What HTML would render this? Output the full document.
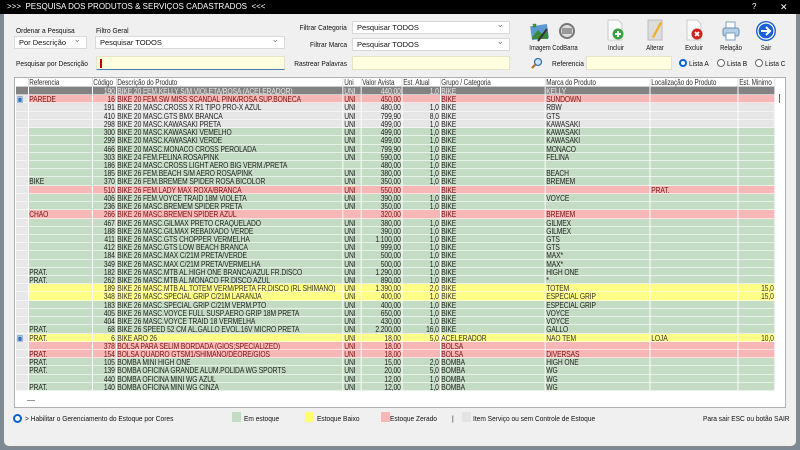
<!DOCTYPE html>
<html><head><meta charset="utf-8"><style>
*{margin:0;padding:0;box-sizing:border-box}
body{width:800px;height:450px;background:#7d8a96;font-family:"Liberation Sans",sans-serif;position:relative;overflow:hidden}
.win{position:absolute;left:3px;top:0;width:794px;height:447px;background:#f0f0f0;border:1px solid #888;border-top:none;border-radius:0 0 6px 6px}
.tb{position:absolute;left:0;top:0;width:800px;height:14px;background:#000;color:#fff;font-size:8px;line-height:14px}
.a{position:absolute;font-size:7.5px;color:#111;white-space:nowrap;transform:scaleX(.88);transform-origin:0 0}
.ar{position:absolute;font-size:7.5px;color:#111;white-space:nowrap;transform:scaleX(.88);transform-origin:100% 0;text-align:right}
.sel{position:absolute;height:13px;background:#fff;border:1px solid #d9d9d9;font-size:7.5px;line-height:11px;padding-left:4px;color:#111}
.sel:after{content:"⌄";position:absolute;right:5px;top:-3px;color:#777;font-size:9px}
.inp{position:absolute;height:14px;background:#ffffe0;border:1px solid #e4e4c8}
.ic{position:absolute;width:22px;height:22px}
.lb{position:absolute;font-size:7px;color:#111;transform:translateX(-50%) scaleX(.85);white-space:nowrap}
.rad{position:absolute;width:8px;height:8px;border-radius:50%;border:1px solid #666;background:#fff}
.rad.on{border:2.5px solid #0a5fd0}
.grid{position:absolute;left:14px;top:77px;width:772px;height:331px;background:#fff;border:1px solid #b0b0b0}
table{position:absolute;left:16px;top:78px;border-collapse:collapse;table-layout:fixed;width:948.75px;transform:scaleX(.8);transform-origin:0 0;font-size:8.4px;letter-spacing:-.1px}
td{height:8.22px;line-height:8.22px;padding:0 1px;border-right:1px solid #fff;box-shadow:inset 0 -1px 0 rgba(255,255,255,.6);white-space:nowrap;overflow:hidden;color:#222}
tr.h td{height:9px;line-height:9px;background:#fff;border-right:1px solid #ddd;color:#333;font-size:8px;box-shadow:inset 0 -1px 0 #ccc}
td.r{text-align:right}
tr.g td{background:#c4dcc4}
tr.p td{background:#f7b7b7;color:#7a1010}
tr.y td{background:#ffff88;color:#333}
tr.w td{background:#e6e6e6}
tr.s td{background:#838383;color:#e8e8e8}
td.i{background:#e8e8e8!important}
.sq{position:absolute;width:9px;height:10px;top:412px}
</style></head><body>
<div class="win"></div>
<div class="tb"><span style="margin-left:7px">&gt;&gt;&gt;&nbsp; PESQUISA DOS PRODUTOS &amp; SERVIÇOS CADASTRADOS &nbsp;&lt;&lt;&lt;</span><span style="position:absolute;left:752px">?</span><span style="position:absolute;left:780px;font-size:9px">✕</span></div>

<div class="a" style="left:16px;top:26px">Ordenar a Pesquisa</div>
<div class="sel" style="left:14px;top:36px;width:73px">Por Descrição</div>
<div class="a" style="left:96px;top:26px">Filtro Geral</div>
<div class="sel" style="left:95px;top:36px;width:190px">Pesquisar TODOS</div>
<div class="a" style="left:16px;top:59px">Pesquisar por Descrição</div>
<div class="inp" style="left:96px;top:56px;width:189px;border-bottom:1px solid #4a7fb0"><div style="position:absolute;left:3px;top:2px;width:2px;height:9px;background:#c00"></div></div>
<div class="ar" style="right:453px;top:23px">Filtrar Categoria</div>
<div class="sel" style="left:352px;top:21px;width:158px">Pesquisar TODOS</div>
<div class="ar" style="right:453px;top:40px">Filtrar Marca</div>
<div class="sel" style="left:352px;top:38px;width:158px">Pesquisar TODOS</div>
<div class="ar" style="right:453px;top:59px">Rastrear Palavras</div>
<div class="inp" style="left:352px;top:56px;width:158px"></div>

<svg class="ic" style="left:529px;top:21px" viewBox="0 0 22 22"><rect x="2" y="4" width="17" height="14" fill="#5a9ad0" transform="rotate(-8 11 11)"/><path d="M3 16 L9 9 L14 14 L19 10 L19 18 L3 18Z" fill="#3a8a3a"/><path d="M9 20 L18 8" stroke="#333" stroke-width="2"/><path d="M4 3 l3 3 M7 3 l-3 3" stroke="#2a8a2a" stroke-width="1.5"/></svg>
<svg class="ic" style="left:556px;top:21px" viewBox="0 0 22 22"><circle cx="11" cy="10" r="8" fill="#777"/><circle cx="11" cy="10" r="6" fill="#ddd"/><path d="M7 7v6M9 7v6M11 7v6M13 7v6M15 7v6" stroke="#555" stroke-width="1"/></svg>
<svg class="ic" style="left:604px;top:19px" viewBox="0 0 22 22"><path d="M4 1h10l4 4v16H4z" fill="#fafafa" stroke="#ccc"/><circle cx="14" cy="15" r="5.5" fill="#3aa040"/><path d="M14 12v6M11 15h6" stroke="#fff" stroke-width="2"/></svg>
<svg class="ic" style="left:644px;top:19px" viewBox="0 0 22 22"><path d="M4 1h14v20H4z" fill="#ddd" stroke="#bbb"/><path d="M8 18 L16 3 L18 4 L10 19z" fill="#f0b020"/></svg>
<svg class="ic" style="left:683px;top:19px" viewBox="0 0 22 22"><path d="M4 1h10l4 4v16H4z" fill="#fafafa" stroke="#ccc"/><circle cx="14" cy="15" r="5.5" fill="#d02020"/><path d="M12 13l4 4M16 13l-4 4" stroke="#fff" stroke-width="1.8"/></svg>
<svg class="ic" style="left:720px;top:20px" viewBox="0 0 22 22"><path d="M6 2h9v6H6z" fill="#fff" stroke="#7aa0c8"/><rect x="3" y="8" width="16" height="8" rx="2" fill="#b8cfe8" stroke="#6a90b8"/><path d="M6 13h9v7H6z" fill="#fff" stroke="#7aa0c8"/></svg>
<svg class="ic" style="left:755px;top:20px" viewBox="0 0 22 22"><circle cx="11" cy="11" r="10" fill="#1a5fd8"/><circle cx="11" cy="11" r="8" fill="none" stroke="#fff" stroke-width="1.2"/><path d="M6 11h8M11 7l4 4-4 4" stroke="#fff" stroke-width="2" fill="none"/></svg>
<div class="lb" style="left:540px;top:45px">Imagem</div>
<div class="lb" style="left:565px;top:45px">CodBarra</div>
<div class="lb" style="left:616px;top:45px">Incluir</div>
<div class="lb" style="left:655px;top:45px">Alterar</div>
<div class="lb" style="left:694px;top:45px">Excluir</div>
<div class="lb" style="left:731px;top:45px">Relação</div>
<div class="lb" style="left:766px;top:45px">Sair</div>
<svg style="position:absolute;left:531px;top:57px" width="12" height="12" viewBox="0 0 12 12"><circle cx="7" cy="5" r="3.5" fill="#cfe4f8" stroke="#3a70b0" stroke-width="1.3"/><path d="M4.5 7.5L1 11" stroke="#b07020" stroke-width="2"/></svg>
<div class="a" style="left:552px;top:59px">Referencia</div>
<div class="inp" style="left:586px;top:56px;width:86px"></div>
<div class="rad on" style="left:679px;top:59px"></div><div class="a" style="left:689px;top:59px">Lista A</div>
<div class="rad" style="left:717px;top:59px"></div><div class="a" style="left:727px;top:59px">Lista B</div>
<div class="rad" style="left:755px;top:59px"></div><div class="a" style="left:765px;top:59px">Lista C</div>

<div class="grid"></div>
<div style="position:absolute;left:779px;top:94px;width:1px;height:9px;background:#666"></div>
<div style="position:absolute;left:27px;top:400px;width:8px;height:1px;background:#999"></div>
<table>
<colgroup><col style="width:15px"><col style="width:80px"><col style="width:30px"><col style="width:283.75px"><col style="width:22.5px"><col style="width:51.25px"><col style="width:47.5px"><col style="width:131.25px"><col style="width:131.25px"><col style="width:110px"><col style="width:46.25px"></colgroup>
<tr class="h"><td></td><td>Referencia</td><td>Código</td><td>Descrição do Produto</td><td>Uni</td><td>Valor Avista</td><td>Est. Atual</td><td>Grupo / Categoria</td><td>Marca do Produto</td><td>Localização do Produto</td><td>Est. Minimo</td></tr>
<tr class="s"><td></td><td></td><td class="r">190</td><td>BIKE 20 FEM.KELLY S/M VIOLETA/ROSA (ACELERADOR)</td><td>UNI</td><td class="r">440,00</td><td class="r">1,0</td><td>BIKE</td><td>KELLY</td><td></td><td></td></tr>
<tr class="p"><td class="i" style="color:#3070c0">▣</td><td>PAREDE</td><td class="r">16</td><td>BIKE 20 FEM.SW MISS SCANDAL PINK/ROSA SUP.BONECA</td><td>UNI</td><td class="r">450,00</td><td class="r"></td><td>BIKE</td><td>SUNDOWN</td><td></td><td></td></tr>
<tr class="w"><td></td><td></td><td class="r">191</td><td>BIKE 20 MASC.CROSS X R1 TIPO PRO-X AZUL</td><td>UNI</td><td class="r">480,00</td><td class="r">1,0</td><td>BIKE</td><td>RBW</td><td></td><td></td></tr>
<tr class="w"><td></td><td></td><td class="r">410</td><td>BIKE 20 MASC.GTS BMX BRANCA</td><td>UNI</td><td class="r">799,90</td><td class="r">8,0</td><td>BIKE</td><td>GTS</td><td></td><td></td></tr>
<tr class="w"><td></td><td></td><td class="r">298</td><td>BIKE 20 MASC.KAWASAKI PRETA</td><td>UNI</td><td class="r">499,00</td><td class="r">1,0</td><td>BIKE</td><td>KAWASAKI</td><td></td><td></td></tr>
<tr class="g"><td class="i"></td><td></td><td class="r">300</td><td>BIKE 20 MASC.KAWASAKI VEMELHO</td><td>UNI</td><td class="r">499,00</td><td class="r">1,0</td><td>BIKE</td><td>KAWASAKI</td><td></td><td></td></tr>
<tr class="g"><td class="i"></td><td></td><td class="r">299</td><td>BIKE 20 MASC.KAWASAKI VERDE</td><td>UNI</td><td class="r">499,00</td><td class="r">1,0</td><td>BIKE</td><td>KAWASAKI</td><td></td><td></td></tr>
<tr class="g"><td class="i"></td><td></td><td class="r">466</td><td>BIKE 20 MASC.MONACO CROSS PEROLADA</td><td>UNI</td><td class="r">799,90</td><td class="r">1,0</td><td>BIKE</td><td>MONACO</td><td></td><td></td></tr>
<tr class="g"><td class="i"></td><td></td><td class="r">303</td><td>BIKE 24 FEM.FELINA ROSA/PINK</td><td>UNI</td><td class="r">590,00</td><td class="r">1,0</td><td>BIKE</td><td>FELINA</td><td></td><td></td></tr>
<tr class="g"><td class="i"></td><td></td><td class="r">186</td><td>BIKE 24 MASC.CROSS LIGHT AERO BIG VERM./PRETA</td><td></td><td class="r">480,00</td><td class="r">1,0</td><td>BIKE</td><td></td><td></td><td></td></tr>
<tr class="g"><td class="i"></td><td></td><td class="r">185</td><td>BIKE 26 FEM.BEACH S/M AERO ROSA/PINK</td><td>UNI</td><td class="r">380,00</td><td class="r">1,0</td><td>BIKE</td><td>BEACH</td><td></td><td></td></tr>
<tr class="g"><td class="i"></td><td>BIKE</td><td class="r">370</td><td>BIKE 26 FEM.BREMEM SPIDER ROSA BICOLOR</td><td>UNI</td><td class="r">350,00</td><td class="r">1,0</td><td>BIKE</td><td>BREMEM</td><td></td><td></td></tr>
<tr class="p"><td class="i"></td><td></td><td class="r">510</td><td>BIKE 26 FEM.LADY MAX ROXA/BRANCA</td><td>UNI</td><td class="r">550,00</td><td class="r"></td><td>BIKE</td><td></td><td>PRAT.</td><td></td></tr>
<tr class="g"><td class="i"></td><td></td><td class="r">406</td><td>BIKE 26 FEM.VOYCE TRAID 18M VIOLETA</td><td>UNI</td><td class="r">390,00</td><td class="r">1,0</td><td>BIKE</td><td>VOYCE</td><td></td><td></td></tr>
<tr class="g"><td class="i"></td><td></td><td class="r">236</td><td>BIKE 26 MASC.BREMEM SPIDER PRETA</td><td>UNI</td><td class="r">350,00</td><td class="r">1,0</td><td>BIKE</td><td></td><td></td><td></td></tr>
<tr class="p"><td class="i"></td><td>CHAO</td><td class="r">266</td><td>BIKE 26 MASC.BREMEN SPIDER AZUL</td><td></td><td class="r">320,00</td><td class="r"></td><td>BIKE</td><td>BREMEM</td><td></td><td></td></tr>
<tr class="g"><td class="i"></td><td></td><td class="r">467</td><td>BIKE 26 MASC.GILMAX PRETO CRAQUELADO</td><td>UNI</td><td class="r">380,00</td><td class="r">1,0</td><td>BIKE</td><td>GILMEX</td><td></td><td></td></tr>
<tr class="g"><td class="i"></td><td></td><td class="r">188</td><td>BIKE 26 MASC.GILMAX REBAIXADO VERDE</td><td>UNI</td><td class="r">390,00</td><td class="r">1,0</td><td>BIKE</td><td>GILMEX</td><td></td><td></td></tr>
<tr class="g"><td class="i"></td><td></td><td class="r">411</td><td>BIKE 26 MASC.GTS CHOPPER VERMELHA</td><td>UNI</td><td class="r">1.100,00</td><td class="r">1,0</td><td>BIKE</td><td>GTS</td><td></td><td></td></tr>
<tr class="g"><td class="i"></td><td></td><td class="r">412</td><td>BIKE 26 MASC.GTS LOW BEACH BRANCA</td><td>UNI</td><td class="r">999,00</td><td class="r">1,0</td><td>BIKE</td><td>GTS</td><td></td><td></td></tr>
<tr class="g"><td class="i"></td><td></td><td class="r">184</td><td>BIKE 26 MASC.MAX C/21M PRETA/VERDE</td><td>UNI</td><td class="r">500,00</td><td class="r">1,0</td><td>BIKE</td><td>MAX*</td><td></td><td></td></tr>
<tr class="g"><td class="i"></td><td></td><td class="r">349</td><td>BIKE 26 MASC.MAX C/21M PRETA/VERMELHA</td><td>UNI</td><td class="r">500,00</td><td class="r">1,0</td><td>BIKE</td><td>MAX*</td><td></td><td></td></tr>
<tr class="g"><td class="i"></td><td>PRAT.</td><td class="r">182</td><td>BIKE 26 MASC.MTB AL.HIGH ONE BRANCA/AZUL FR.DISCO</td><td>UNI</td><td class="r">1.290,00</td><td class="r">1,0</td><td>BIKE</td><td>HIGH ONE</td><td></td><td></td></tr>
<tr class="g"><td class="i"></td><td>PRAT.</td><td class="r">262</td><td>BIKE 26 MASC.MTB AL.MONACO FR.DISCO AZUL</td><td>UNI</td><td class="r">890,00</td><td class="r">1,0</td><td>BIKE</td><td>*</td><td></td><td></td></tr>
<tr class="y"><td class="i"></td><td></td><td class="r">189</td><td>BIKE 26 MASC.MTB AL.TOTEM VERM/PRETA FR.DISCO (RL SHIMANO)</td><td>UNI</td><td class="r">1.390,00</td><td class="r">2,0</td><td>BIKE</td><td>TOTEM</td><td></td><td class="r">15,0</td></tr>
<tr class="y"><td class="i"></td><td></td><td class="r">348</td><td>BIKE 26 MASC.SPECIAL GRIP C/21M LARANJA</td><td>UNI</td><td class="r">400,00</td><td class="r">1,0</td><td>BIKE</td><td>ESPECIAL GRIP</td><td></td><td class="r">15,0</td></tr>
<tr class="g"><td class="i"></td><td></td><td class="r">183</td><td>BIKE 26 MASC.SPECIAL GRIP C/21M VERM.PTO</td><td>UNI</td><td class="r">400,00</td><td class="r">1,0</td><td>BIKE</td><td>ESPECIAL GRIP</td><td></td><td></td></tr>
<tr class="g"><td class="i"></td><td></td><td class="r">405</td><td>BIKE 26 MASC.VOYCE FULL SUSP.AERO GRIP 18M PRETA</td><td>UNI</td><td class="r">650,00</td><td class="r">1,0</td><td>BIKE</td><td>VOYCE</td><td></td><td></td></tr>
<tr class="g"><td class="i"></td><td></td><td class="r">404</td><td>BIKE 26 MASC.VOYCE TRAID 18 VERMELHA</td><td>UNI</td><td class="r">430,00</td><td class="r">1,0</td><td>BIKE</td><td>VOYCE</td><td></td><td></td></tr>
<tr class="g"><td class="i"></td><td>PRAT.</td><td class="r">68</td><td>BIKE 26 SPEED 52 CM AL.GALLO EVOL.16V MICRO PRETA</td><td>UNI</td><td class="r">2.200,00</td><td class="r">16,0</td><td>BIKE</td><td>GALLO</td><td></td><td></td></tr>
<tr class="y"><td class="i" style="color:#3070c0">▣</td><td>PRAT.</td><td class="r">6</td><td>BIKE ARO 26</td><td>UNI</td><td class="r">18,00</td><td class="r">5,0</td><td>ACELERADOR</td><td>NAO TEM</td><td>LOJA</td><td class="r">10,0</td></tr>
<tr class="p"><td class="i"></td><td></td><td class="r">378</td><td>BOLSA PARA SELIM BORDADA (GIOS;SPECIALIZED)</td><td>UNI</td><td class="r">18,00</td><td class="r"></td><td>BOLSA</td><td></td><td></td><td></td></tr>
<tr class="p"><td class="i"></td><td>PRAT.</td><td class="r">154</td><td>BOLSA QUADRO GTSM1/SHIMANO/DEORE/GIOS</td><td>UNI</td><td class="r">18,00</td><td class="r"></td><td>BOLSA</td><td>DIVERSAS</td><td></td><td></td></tr>
<tr class="g"><td class="i"></td><td>PRAT.</td><td class="r">105</td><td>BOMBA MINI HIGH ONE</td><td>UNI</td><td class="r">15,00</td><td class="r">2,0</td><td>BOMBA</td><td>HIGH ONE</td><td></td><td></td></tr>
<tr class="g"><td class="i"></td><td>PRAT.</td><td class="r">139</td><td>BOMBA OFICINA GRANDE ALUM.POLIDA WG SPORTS</td><td>UNI</td><td class="r">20,00</td><td class="r">5,0</td><td>BOMBA</td><td>WG</td><td></td><td></td></tr>
<tr class="g"><td class="i"></td><td></td><td class="r">440</td><td>BOMBA OFICINA MINI WG AZUL</td><td>UNI</td><td class="r">12,00</td><td class="r">1,0</td><td>BOMBA</td><td>WG</td><td></td><td></td></tr>
<tr class="g"><td class="i"></td><td>PRAT.</td><td class="r">140</td><td>BOMBA OFICINA MINI WG CINZA</td><td>UNI</td><td class="r">12,00</td><td class="r">1,0</td><td>BOMBA</td><td>WG</td><td></td><td></td></tr>
</table>

<div class="rad on" style="left:13px;top:414px;width:9px;height:9px"></div>
<div class="a" style="left:25px;top:414px">&gt; Habilitar o Gerenciamento do Estoque por Cores</div>
<div class="sq" style="left:232px;background:#c4dcc4"></div><div class="a" style="left:244px;top:414px">Em estoque</div>
<div class="sq" style="left:305px;background:#ffff70"></div><div class="a" style="left:317px;top:414px">Estoque Baixo</div>
<div class="sq" style="left:381px;background:#f7b7b7"></div><div class="a" style="left:390px;top:414px">Estoque Zerado</div>
<div class="a" style="left:452px;top:414px">|</div>
<div class="sq" style="left:462px;background:#e4e4e4"></div><div class="a" style="left:473px;top:414px">Item Serviço ou sem Controle de Estoque</div>
<div class="a" style="left:703px;top:414px">Para sair ESC ou botão SAIR</div>
</body></html>
